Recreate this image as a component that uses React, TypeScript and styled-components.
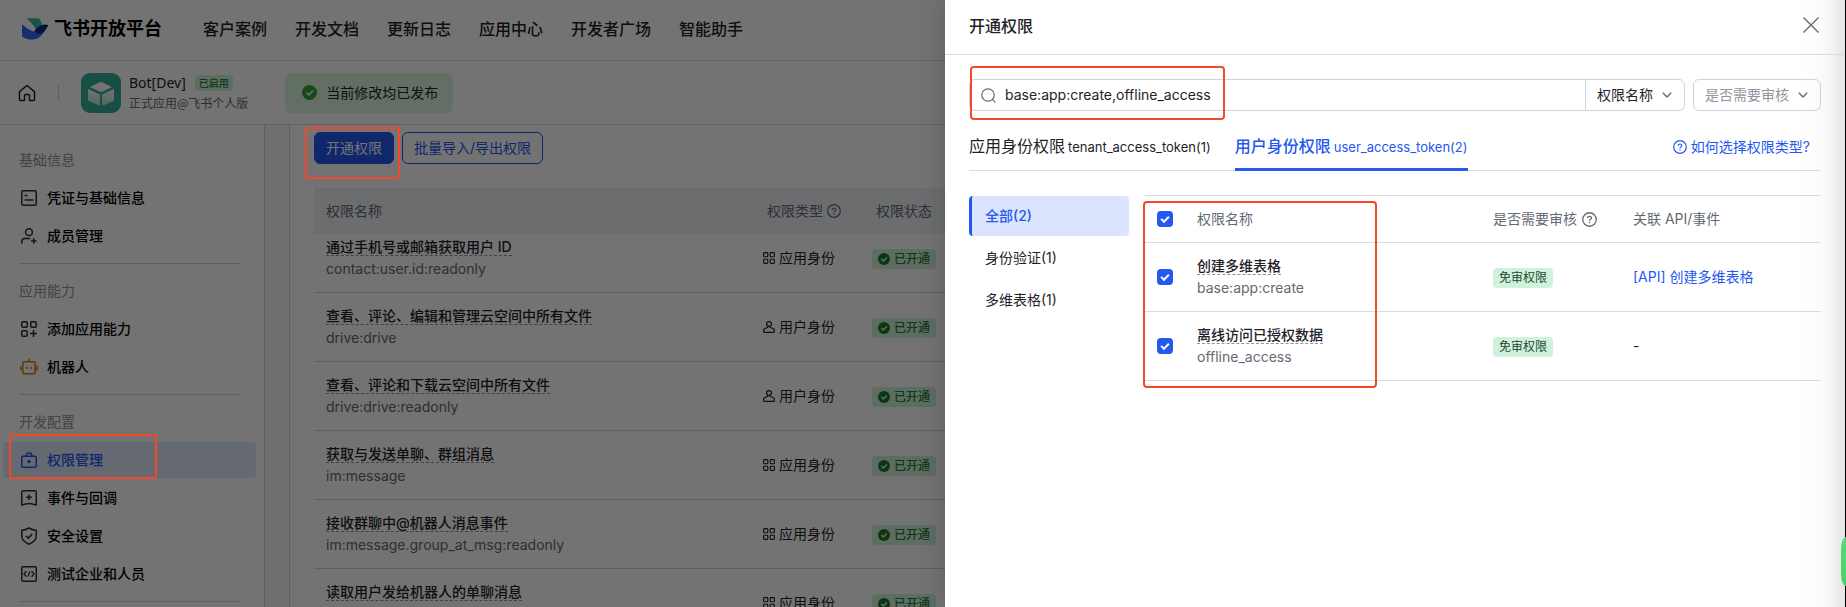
import React from "react";
import styled, { createGlobalStyle, css } from "styled-components";

const c = {
  text: "#1f2329",
  title: "#000000",
  sub: "#646a73",
  muted: "#8f959e",
  line: "#dadbdd",
  field: "#d0d3d6",
  blue: "#2458f0",
  blueSoft: "#dae5fd",
  greenSoft: "#d0f1dd",
  red: "#f5482a",
};

const GlobalStyle = createGlobalStyle`
  *, *::before, *::after { box-sizing: border-box; }
  body {
    margin: 0;
    background: #fff;
    color: ${c.text};
    font-family: Inter, "Noto Sans CJK SC", sans-serif;
    font-size: 14px;
    line-height: 22px;
  }
  button, input, select { font: inherit; color: inherit; margin: 0; }
  button { cursor: pointer; }
  a { color: inherit; text-decoration: none; }
  ul { list-style: none; margin: 0; padding: 0; }
  h1, h2, h3, p { margin: 0; font-weight: inherit; font-size: inherit; }
`;

/* ---------- shell ---------- */

const Shell = styled.div`
  position: relative;
  display: flex;
  flex-direction: column;
  height: 100vh;
  overflow: hidden;
`;

const Mask = styled.div`
  position: absolute;
  inset: 0;
  z-index: 5;
  background: rgba(0, 0, 0, 0.55);
`;

const Highlight = styled.span<{ $inset: string }>`
  position: absolute;
  inset: ${(p) => p.$inset};
  z-index: 10;
  border: 2px solid ${c.red};
  border-radius: 4px;
  pointer-events: none;
`;

/* ---------- top navigation ---------- */

const TopBar = styled.header`
  display: flex;
  align-items: center;
  flex: none;
  height: 61px;
  padding: 0 22px 2px;
  border-bottom: 1px solid ${c.line};
`;

const Brand = styled.a`
  display: flex;
  align-items: center;
  gap: 5px;
  margin-right: 41px;
  color: ${c.title};
  font-size: 18px;
  line-height: 24px;
  font-weight: 700;
`;

const TopNav = styled.nav`
  display: flex;
  gap: 28px;
  font-size: 16px;
  line-height: 24px;
  font-weight: 500;
  white-space: nowrap;
`;

/* ---------- app bar ---------- */

const AppBar = styled.section`
  display: flex;
  align-items: center;
  flex: none;
  height: 64px;
  padding: 0 18px;
  border-bottom: 1px solid ${c.line};
`;

const HomeLink = styled.a`
  display: flex;
`;

const BarDivider = styled.span`
  width: 1px;
  height: 16px;
  margin: 0 22px;
  background: ${c.field};
`;

const AppMeta = styled.div`
  display: flex;
  flex-direction: column;
  margin-left: 8px;
`;

const AppName = styled.div`
  display: flex;
  align-items: center;
  gap: 9px;
  height: 20px;
  font-family: "Noto Sans", "Noto Sans CJK SC", sans-serif;
`;

const EnabledTag = styled.span`
  padding: 0 4px;
  border-radius: 4px;
  background: ${c.greenSoft};
  color: #23802c;
  font-size: 10px;
  line-height: 16px;
  font-weight: 500;
`;

const AppKind = styled.p`
  color: ${c.sub};
  font-family: "Noto Sans CJK SC", sans-serif;
  font-size: 12px;
  line-height: 20px;
`;

const Notice = styled.p`
  display: flex;
  align-items: center;
  gap: 9px;
  height: 40px;
  margin-left: 37px;
  padding: 0 15px 0 17px;
  border-radius: 6px;
  background: #dcf7e0;
`;

/* ---------- body ---------- */

const Body = styled.div`
  display: flex;
  flex: 1;
  min-height: 0;
  background: #f5f6f7;
`;

const Sidebar = styled.aside`
  flex: none;
  width: 265px;
  padding: 17px 8px 0 3px;
  border-right: 1px solid ${c.field};
  background: #fff;
`;

const Group = styled.ul`
  display: flex;
  flex-direction: column;
  gap: 2px;
`;

const GroupLabel = styled.li`
  padding: 0 16px;
  color: ${c.muted};
  line-height: 36px;
`;

const GroupRule = styled.hr`
  height: 1px;
  margin: 9px 16px;
  border: 0;
  background: ${c.field};
`;

const NavItem = styled.li`
  position: relative;
`;

const NavLink = styled.a<{ $active?: boolean }>`
  display: flex;
  align-items: center;
  gap: 10px;
  height: 36px;
  padding: 0 18px;
  border-radius: 4px;
  color: ${(p) => (p.$active ? c.blue : c.title)};
  background: ${(p) => (p.$active ? "#dfe8fc" : "transparent")};
  font-weight: 500;

  svg {
    color: ${(p) => (p.$active ? c.blue : "#2b2f36")};
  }
`;

const Content = styled.main`
  flex: 1;
  min-width: 0;
  margin-left: 24px;
  padding: 7px 24px 0;
  overflow: hidden;
  border-left: 1px solid ${c.field};
  background: #fff;
`;

const Actions = styled.div`
  display: flex;
  gap: 8px;
  margin-bottom: 24px;
`;

const ActionSlot = styled.div`
  position: relative;
`;

const ActionButton = styled.button<{ $primary?: boolean }>`
  height: 32px;
  padding: 0 11px;
  border: 1px solid ${c.blue};
  border-radius: 6px;
  background: ${(p) => (p.$primary ? c.blue : "transparent")};
  color: ${(p) => (p.$primary ? "#fff" : c.blue)};
  line-height: 22px;
`;

const ScopeTable = styled.table`
  width: 100%;
  border-collapse: separate;
  border-spacing: 0;
  table-layout: fixed;

  th,
  td {
    padding: 12px;
    text-align: left;
  }

  th {
    color: ${c.sub};
    font-weight: 400;
  }

  td {
    border-bottom: 1px solid ${c.line};
  }
`;

const GrantedTable = styled(ScopeTable)`
  th {
    height: 46px;
    background: #eff1f4;
  }

  td {
    border-bottom-color: ${c.field};
  }

  tbody tr:first-child td {
    padding-top: 2px;
  }

  td + td {
    padding-left: 8px;
  }
`;

const Col = styled.col<{ $w?: number }>`
  width: ${(p) => (p.$w ? `${p.$w}px` : "auto")};
`;

const NameLine = styled.div`
  display: flex;
  align-items: flex-start;
  height: 22px;
  padding-top: 3px;
  white-space: nowrap;
`;

const Name = styled.span`
  border-bottom: 1px dashed ${c.muted};
  line-height: 16px;
  font-weight: 500;
`;

const Code = styled.div`
  min-height: 22px;
  color: ${c.sub};
  white-space: nowrap;
`;

const Inline = styled.span<{ $gap: number }>`
  display: flex;
  align-items: center;
  gap: ${(p) => p.$gap}px;
  white-space: nowrap;
`;

const tag = css`
  display: inline-flex;
  align-items: center;
  height: 20px;
  padding: 0 6px;
  border-radius: 4px;
  background: ${c.greenSoft};
  font-size: 12px;
  line-height: 20px;
  white-space: nowrap;
  vertical-align: middle;
`;

const StatusTag = styled.span`
  ${tag}
  gap: 4px;
  color: #23802c;
  font-weight: 500;
`;

const ReviewTag = styled.span`
  ${tag}
  color: #1c4a27;
`;

/* ---------- drawer ---------- */

const Drawer = styled.section`
  position: absolute;
  top: 0;
  right: 0;
  bottom: 0;
  z-index: 6;
  width: 901px;
  max-width: 100%;
  border-right: 1px solid #000;
  background: linear-gradient(to left, #e4e4e4 0, #f1f1f1 10px, #fafafa 22px, #fff 44px);
  box-shadow: -4px 0 24px rgba(0, 0, 0, 0.14);
`;

const DrawerHead = styled.div`
  display: flex;
  align-items: center;
  justify-content: space-between;
  height: 55px;
  padding: 0 25px 2px 24px;
  border-bottom: 1px solid ${c.line};
  font-size: 16px;
  line-height: 24px;
  font-weight: 500;
`;

const CloseButton = styled.button`
  display: flex;
  padding: 0 0 2px;
  border: 0;
  background: none;
  color: ${c.sub};
`;

const DrawerBody = styled.div`
  padding: 24px 24px 0;
`;

const Filters = styled.form`
  display: flex;
  gap: 8px;
`;

const SearchGroup = styled.div`
  position: relative;
  display: flex;
  flex: 1;
  height: 32px;
  border: 1px solid ${c.field};
  border-radius: 6px;
`;

const SearchLabel = styled.label`
  display: flex;
  align-items: center;
  flex: 1;
  gap: 9px;
  padding: 0 11px;
  color: ${c.sub};
`;

const SearchInput = styled.input`
  flex: 1;
  min-width: 0;
  padding: 0;
  border: 0;
  outline: 0;
  background: none;
  color: ${c.text};
`;

const SelectBox = styled.div<{ $w: number; $framed?: boolean }>`
  position: relative;
  flex: none;
  width: ${(p) => p.$w}px;
  color: ${(p) => (p.$framed ? c.muted : c.text)};
  ${(p) =>
    p.$framed
      ? css`
          height: 32px;
          border: 1px solid ${c.field};
          border-radius: 6px;
        `
      : css`
          border-left: 1px solid ${c.field};
        `}

  select {
    width: 100%;
    height: 30px;
    padding: 0 0 0 11px;
    border: 0;
    outline: 0;
    appearance: none;
    background: none;
  }

  svg {
    position: absolute;
    top: 10px;
    right: 12px;
    color: ${c.sub};
    pointer-events: none;
  }
`;

const Tabs = styled.div`
  display: flex;
  align-items: stretch;
  gap: 24px;
  height: 44px;
  margin-top: 16px;
  border-bottom: 1px solid ${c.line};
`;

const Tab = styled.button<{ $active?: boolean }>`
  display: flex;
  align-items: baseline;
  gap: 3px;
  margin-bottom: -1px;
  padding: 7px 0 0;
  border: 0;
  border-bottom: 3px solid ${(p) => (p.$active ? c.blue : "transparent")};
  border-radius: 2px 2px 0 0;
  background: none;
  color: ${(p) => (p.$active ? c.blue : c.text)};
  font-size: 16px;
  line-height: 24px;
  font-weight: ${(p) => (p.$active ? 500 : 400)};
  white-space: nowrap;

  small {
    font-size: 13px;
    font-weight: 400;
  }
`;

const HelpLink = styled.a`
  display: flex;
  align-items: center;
  gap: 4px;
  margin: 0 11px 4px auto;
  color: ${c.blue};
`;

const Split = styled.div`
  display: flex;
  align-items: flex-start;
  gap: 16px;
  margin-top: 24px;
`;

const Categories = styled.nav`
  display: flex;
  flex: none;
  flex-direction: column;
  gap: 2px;
  width: 160px;
  padding-top: 1px;
`;

const Category = styled.a<{ $active?: boolean }>`
  height: 40px;
  padding-left: 13px;
  border-left: 3px solid ${(p) => (p.$active ? c.blue : "transparent")};
  border-radius: 4px;
  background: ${(p) => (p.$active ? c.blueSoft : "transparent")};
  color: ${(p) => (p.$active ? c.blue : c.text)};
  font-weight: ${(p) => (p.$active ? 500 : 400)};
  line-height: 40px;
`;

const PickerWrap = styled.div`
  position: relative;
  flex: 1;
  min-width: 0;
`;

const PickerTable = styled(ScopeTable)`
  th {
    height: 48px;
    border-top: 1px solid ${c.line};
    border-bottom: 1px solid ${c.line};
  }

  th:last-child,
  td:last-child {
    padding-right: 0;
  }
`;

const Check = styled.input`
  display: grid;
  place-content: center;
  width: 16px;
  height: 16px;
  border-radius: 4px;
  appearance: none;
  background: ${c.blue};

  &::after {
    content: "";
    width: 8px;
    height: 5px;
    margin-bottom: 2px;
    border: solid #fff;
    border-width: 0 0 2px 2px;
    transform: rotate(-45deg);
  }
`;

const ApiLink = styled.a`
  color: ${c.blue};
`;

const EdgeWidget = styled.button`
  position: absolute;
  top: 537px;
  right: 0;
  z-index: 12;
  width: 5px;
  height: 49px;
  padding: 0;
  border: 0;
  border-radius: 5px 0 0 5px / 12px 0 0 12px;
  background: linear-gradient(#56dc74, #48cf65);
`;

/* ---------- icons ---------- */

type IconProps = { size?: number; children: React.ReactNode; box?: number; stroke?: number };

const Icon = ({ size = 18, box = 18, stroke = 1.5, children }: IconProps) => (
  <svg
    width={size}
    height={size}
    viewBox={`0 0 ${box} ${box}`}
    fill="none"
    stroke="currentColor"
    strokeWidth={stroke}
    strokeLinejoin="round"
    aria-hidden="true"
  >
    {children}
  </svg>
);

const Logo = () => (
  <svg width="27" height="24" viewBox="0 0 27 24" aria-hidden="true">
    <path d="M4.5 1.2h12.3c1.8 2 3 4.400 3.600 7.200-2.400.9-4.300 2.400-6.300 4.400C11.600 8.700 8.600 4.500 4.500 1.200Z" fill="#3bb8a4" />
    <path d="M0 7.200c4.200 4 9.300 7 15 8.400 2.600.6 5.200.2 7-1.200-2.400 5-6.800 8.200-12 8.200-3.800 0-7.300-1.200-10-3.200V7.200Z" fill="#2f66f2" />
    <path d="M12 14.400c3.200-3.600 6.400-6.600 11-6.800 1.300 0 2.500.2 3.600.7-2.400 2.400-2.900 7-7.300 8-2.600.6-5.200-.6-7.300-1.900Z" fill="#0c2a85" />
  </svg>
);

const AppLogo = () => (
  <svg width="40" height="40" viewBox="0 0 40 40" aria-hidden="true">
    <defs>
      <linearGradient id="cube" x1="0" y1="0" x2="0" y2="1">
        <stop offset="0" stopColor="#fff" />
        <stop offset="1" stopColor="#b5e0d6" />
      </linearGradient>
    </defs>
    <rect width="40" height="40" rx="9" fill="#36b099" />
    <path d="M20 8.800 31 14l-11 5.200L9 14Z" fill="#fff" />
    <path d="M7 16l12 5.600V33L8.200 28.200C7.400 27.800 7 27.200 7 26.300Z" fill="url(#cube)" />
    <path d="M33 16l-12 5.600V33l10.800-4.800c.8-.4 1.200-1 1.200-1.900Z" fill="url(#cube)" />
  </svg>
);

const HomeIcon = () => (
  <Icon>
    <path d="M1.500 7.600 9 1.500l7.500 6.100v7.900a1 1 0 0 1-1 1h-4V11.500a1 1 0 0 0-1-1h-3a1 1 0 0 0-1 1v5h-4a1 1 0 0 1-1-1Z" />
  </Icon>
);

const SolidCheck = ({ size, color }: { size: number; color: string }) => (
  <svg width={size} height={size} viewBox="0 0 16 16" aria-hidden="true">
    <circle cx="8" cy="8" r="8" fill={color} />
    <path d="m4.500 8 2.600 2.600 4.600-4.600" fill="none" stroke="#e4f6e8" strokeWidth="1.800" />
  </svg>
);

const QuestionIcon = ({ size = 14 }: { size?: number }) => (
  <Icon size={size} box={14} stroke={1.2}>
    <circle cx="7" cy="7" r="6.300" />
    <path d="M5.200 5.700c0-1 .8-1.700 1.800-1.700s1.800.7 1.800 1.600c0 1.200-1.800 1.300-1.800 2.600M7 9.200v1.200" />
  </Icon>
);

const ChevronIcon = () => (
  <Icon size={10} box={10} stroke={1.4}>
    <path d="m.8 2.800 4.200 4.300 4.200-4.300" />
  </Icon>
);

const AppTypeIcon = () => (
  <Icon size={12} box={12} stroke={1.1}>
    <rect x=".6" y=".6" width="4.200" height="4.200" rx=".8" />
    <rect x="7.200" y=".6" width="4.200" height="4.200" rx=".8" />
    <rect x=".6" y="7.200" width="4.200" height="4.200" rx=".8" />
    <rect x="7.200" y="7.200" width="4.200" height="4.200" rx=".8" />
  </Icon>
);

const UserTypeIcon = () => (
  <Icon size={12} box={12} stroke={1.2}>
    <circle cx="6" cy="3" r="2.400" />
    <path d="M5 5.400c.2 1.200-.6 1.400-1.800 1.600C1.400 7.300.6 8.200.6 9.700v.9c0 .5.3.8.8.8h9.200c.5 0 .8-.3.800-.8v-.9c0-1.500-.8-2.400-2.600-2.700-1.200-.2-2-.4-1.800-1.600" />
  </Icon>
);

const navIcons = {
  card: (
    <Icon size={16} box={16}>
      <rect x=".75" y=".75" width="14.500" height="14.500" rx="1.500" />
      <path d="M3.500 5.500h3M3.500 10h9" />
    </Icon>
  ),
  member: (
    <Icon size={16} box={16}>
      <circle cx="8" cy="4.200" r="3.400" />
      <path d="M.75 15.800v-2.300c0-2 1.200-3.100 3-3.100h5.500M12.800 10.200v5.600M10 13h5.600" />
    </Icon>
  ),
  ability: (
    <Icon size={16} box={16}>
      <rect x=".75" y=".75" width="5.500" height="5.500" rx="1.200" />
      <rect x="9.750" y=".75" width="5.500" height="5.500" rx="1.200" />
      <rect x=".75" y="9.750" width="5.500" height="5.500" rx="1.200" />
      <path d="M12.500 9v7M9 12.500h7" />
    </Icon>
  ),
  bot: (
    <Icon size={18} box={18}>
      <g stroke="#d9780f">
        <rect x="2.800" y="3.800" width="12.400" height="12" rx="1.200" />
        <path d="M9 .8v3M.9 8v4.500M17.100 8v4.500M6.800 8.800v2.200M11.200 8.800v2.200" />
      </g>
    </Icon>
  ),
  lock: (
    <Icon size={16} box={16}>
      <rect x=".75" y="4.200" width="14.500" height="11" rx="1.500" />
      <path d="M5 4.200c0-2 1.200-3.200 3-3.200s3 1.200 3 3.200" />
      <circle cx="8" cy="9.500" r="1" fill="currentColor" />
    </Icon>
  ),
  event: (
    <Icon size={16} box={16}>
      <path d="M.75 2.200c0-.8.600-1.400 1.400-1.400h11.700c.8 0 1.400.600 1.400 1.400v12.900c-2.400-1-4.800-1.700-7.250-1.700s-4.850.7-7.250 1.700ZM8 4.500v5.600M5.200 7.300h5.600" />
    </Icon>
  ),
  shield: (
    <Icon size={18} box={18}>
      <path d="M9 1c2.400 1.400 4.800 2.100 7.200 2.300v6.200c0 3.200-3 5.800-7.200 7.700C4.800 15.300 1.800 12.700 1.800 9.500V3.300C4.200 3.100 6.600 2.400 9 1ZM5.800 8.800l2.400 2.300 4-4" />
    </Icon>
  ),
  code: (
    <Icon size={16} box={16}>
      <rect x=".75" y=".75" width="14.500" height="14.500" rx="1.200" />
      <path d="M5.500 5.200 3 8l2.500 2.800M10.500 5.200 13 8l-2.500 2.800M8.900 5.600l-1.800 4.800" strokeWidth="1.300" />
    </Icon>
  ),
};

const IconSlot = styled.span`
  display: flex;
  align-items: center;
  justify-content: center;
  flex: none;
  width: 16px;

  svg {
    flex: none;
  }
`;

/* ---------- data ---------- */

type NavEntry = { label: string; icon: keyof typeof navIcons; active?: boolean };

const groups: { title: string; items: NavEntry[] }[] = [
  {
    title: "基础信息",
    items: [
      { label: "凭证与基础信息", icon: "card" },
      { label: "成员管理", icon: "member" },
    ],
  },
  {
    title: "应用能力",
    items: [
      { label: "添加应用能力", icon: "ability" },
      { label: "机器人", icon: "bot" },
    ],
  },
  {
    title: "开发配置",
    items: [
      { label: "权限管理", icon: "lock", active: true },
      { label: "事件与回调", icon: "event" },
      { label: "安全设置", icon: "shield" },
      { label: "测试企业和人员", icon: "code" },
    ],
  },
];

const topLinks = ["客户案例", "开发文档", "更新日志", "应用中心", "开发者广场", "智能助手"];

const granted: { name: string; code?: string; type: "app" | "user" }[] = [
  { name: "通过手机号或邮箱获取用户 ID", code: "contact:user.id:readonly", type: "app" },
  { name: "查看、评论、编辑和管理云空间中所有文件", code: "drive:drive", type: "user" },
  { name: "查看、评论和下载云空间中所有文件", code: "drive:drive:readonly", type: "user" },
  { name: "获取与发送单聊、群组消息", code: "im:message", type: "app" },
  { name: "接收群聊中@机器人消息事件", code: "im:message.group_at_msg:readonly", type: "app" },
  { name: "读取用户发给机器人的单聊消息", type: "app" },
];

const picks = [
  { name: "创建多维表格", code: "base:app:create", api: "[API] 创建多维表格" },
  { name: "离线访问已授权数据", code: "offline_access" },
];

const categories = ["全部(2)", "身份验证(1)", "多维表格(1)"];

/* ---------- view ---------- */

const ScopeName = ({ name, code }: { name: string; code?: string }) => (
  <>
    <NameLine>
      <Name>{name}</Name>
    </NameLine>
    <Code>{code}</Code>
  </>
);

export default function App() {
  return (
    <Shell>
      <GlobalStyle />
      <TopBar>
        <Brand href="#">
          <Logo />
          飞书开放平台
        </Brand>
        <TopNav>
          {topLinks.map((l) => (
            <a href="#" key={l}>
              {l}
            </a>
          ))}
        </TopNav>
      </TopBar>

      <AppBar>
        <HomeLink href="#" aria-label="首页">
          <HomeIcon />
        </HomeLink>
        <BarDivider />
        <AppLogo />
        <AppMeta>
          <AppName>
            Bot[Dev] <EnabledTag>已启用</EnabledTag>
          </AppName>
          <AppKind>正式应用@飞书个人版</AppKind>
        </AppMeta>
        <Notice>
          <SolidCheck size={15} color="#34a432" />
          当前修改均已发布
        </Notice>
      </AppBar>

      <Body>
        <Sidebar>
          {groups.map((g) => (
            <React.Fragment key={g.title}>
              <Group>
                <GroupLabel>{g.title}</GroupLabel>
                {g.items.map((it) => (
                  <NavItem key={it.label}>
                    <NavLink href="#" $active={it.active}>
                      <IconSlot>{navIcons[it.icon]}</IconSlot>
                      {it.label}
                    </NavLink>
                    {it.active && <Highlight $inset="-8px 99px -1px 6px" />}
                  </NavItem>
                ))}
              </Group>
              <GroupRule />
            </React.Fragment>
          ))}
        </Sidebar>

        <Content>
          <Actions>
            <ActionSlot>
              <ActionButton $primary>开通权限</ActionButton>
              <Highlight $inset="-5px -6px -15px -9px" />
            </ActionSlot>
            <ActionButton>批量导入/导出权限</ActionButton>
          </Actions>
          <GrantedTable>
            <colgroup>
              <Col $w={441} />
              <Col $w={109} />
              <Col />
            </colgroup>
            <thead>
              <tr>
                <th>权限名称</th>
                <th>
                  <Inline $gap={4}>
                    权限类型 <QuestionIcon />
                  </Inline>
                </th>
                <th>权限状态</th>
              </tr>
            </thead>
            <tbody>
              {granted.map((r) => (
                <tr key={r.name}>
                  <td>
                    <ScopeName name={r.name} code={r.code} />
                  </td>
                  <td>
                    <Inline $gap={4}>
                      {r.type === "app" ? <AppTypeIcon /> : <UserTypeIcon />}
                      {r.type === "app" ? "应用身份" : "用户身份"}
                    </Inline>
                  </td>
                  <td>
                    <StatusTag>
                      <SolidCheck size={12} color="#1f7a26" />
                      已开通
                    </StatusTag>
                  </td>
                </tr>
              ))}
            </tbody>
          </GrantedTable>
        </Content>
      </Body>

      <Mask />

      <Drawer role="dialog" aria-label="开通权限">
        <DrawerHead>
          <h2>开通权限</h2>
          <CloseButton aria-label="关闭">
            <Icon size={18} box={18} stroke={1.4}>
              <path d="m1.500 1.500 15 15M16.500 1.500l-15 15" />
            </Icon>
          </CloseButton>
        </DrawerHead>
        <DrawerBody>
          <Filters>
            <SearchGroup>
              <SearchLabel>
                <Icon size={15} box={15} stroke={1.2}>
                  <circle cx="7" cy="7" r="6.200" />
                  <path d="m11.400 11.400 2.900 2.900" />
                </Icon>
                <SearchInput type="text" aria-label="搜索权限" defaultValue="base:app:create,offline_access" />
              </SearchLabel>
              <SelectBox $w={99}>
                <select aria-label="搜索字段">
                  <option>权限名称</option>
                </select>
                <ChevronIcon />
              </SelectBox>
              <Highlight $inset="-14px 459px -10px 0" />
            </SearchGroup>
            <SelectBox $w={128} $framed>
              <select aria-label="审核筛选">
                <option>是否需要审核</option>
              </select>
              <ChevronIcon />
            </SelectBox>
          </Filters>

          <Tabs role="tablist">
            <Tab role="tab" aria-selected="false">
              应用身份权限 <small>tenant_access_token(1)</small>
            </Tab>
            <Tab role="tab" aria-selected="true" $active>
              用户身份权限 <small>user_access_token(2)</small>
            </Tab>
            <HelpLink href="#">
              <QuestionIcon />
              如何选择权限类型?
            </HelpLink>
          </Tabs>

          <Split>
            <Categories>
              {categories.map((k, i) => (
                <Category href="#" key={k} $active={i === 0}>
                  {k}
                </Category>
              ))}
            </Categories>
            <PickerWrap>
              <PickerTable>
                <colgroup>
                  <Col $w={40} />
                  <Col />
                  <Col $w={140} />
                  <Col $w={200} />
                </colgroup>
                <thead>
                  <tr>
                    <th>
                      <Check type="checkbox" defaultChecked aria-label="全选" />
                    </th>
                    <th>权限名称</th>
                    <th>
                      <Inline $gap={5}>
                        是否需要审核 <QuestionIcon size={15} />
                      </Inline>
                    </th>
                    <th>关联 API/事件</th>
                  </tr>
                </thead>
                <tbody>
                  {picks.map((p) => (
                    <tr key={p.code}>
                      <td>
                        <Check type="checkbox" defaultChecked aria-label={p.name} />
                      </td>
                      <td>
                        <ScopeName name={p.name} code={p.code} />
                      </td>
                      <td>
                        <ReviewTag>免审权限</ReviewTag>
                      </td>
                      <td>{p.api ? <ApiLink href="#">{p.api}</ApiLink> : "-"}</td>
                    </tr>
                  ))}
                </tbody>
              </PickerTable>
              <Highlight $inset="6px 444px -7px -2px" />
            </PickerWrap>
          </Split>
        </DrawerBody>
      </Drawer>
      <EdgeWidget aria-label="侧边工具" />
    </Shell>
  );
}
